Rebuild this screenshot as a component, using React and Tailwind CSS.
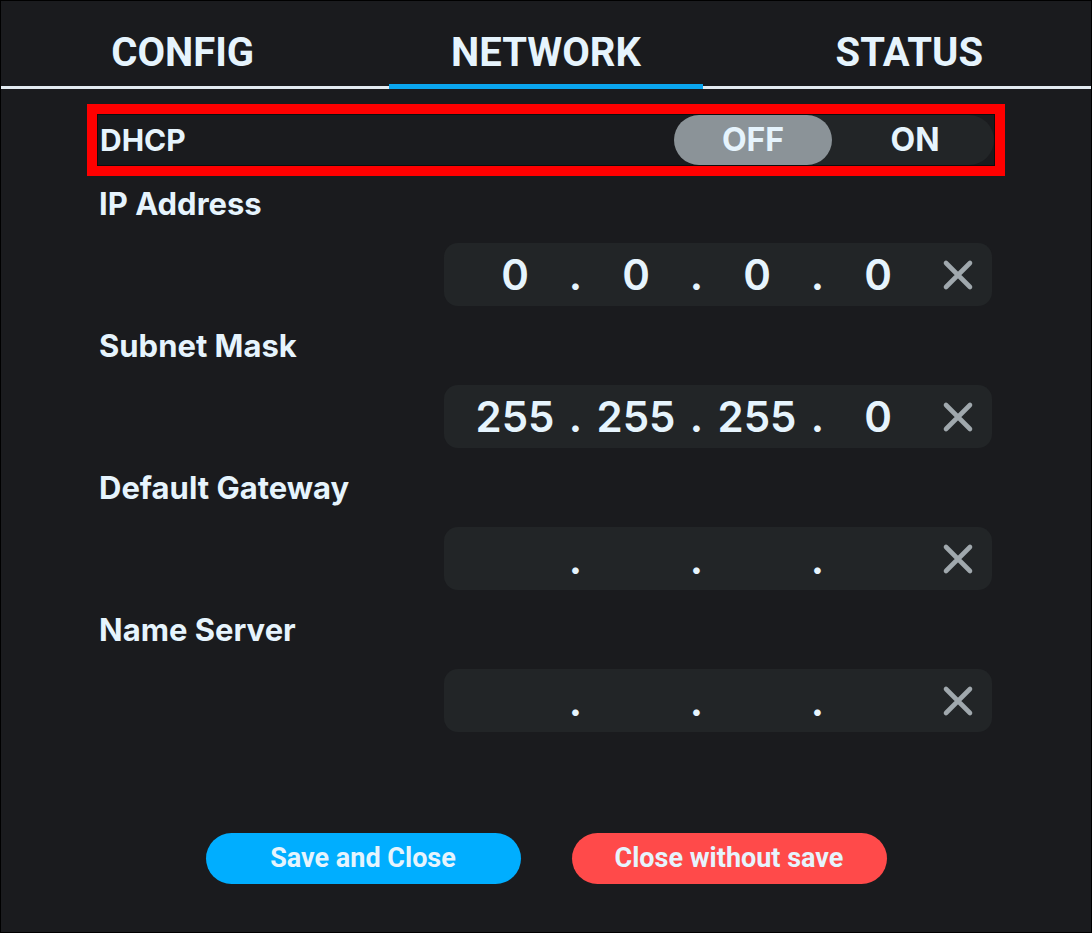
import React from 'react';

const tabs = ['CONFIG', 'NETWORK', 'STATUS'];

const fields = [
  { label: 'IP Address', parts: ['0', '0', '0', '0'] },
  { label: 'Subnet Mask', parts: ['255', '255', '255', '0'] },
  { label: 'Default Gateway', parts: ['', '', '', ''] },
  { label: 'Name Server', parts: ['', '', '', ''] },
];

function ClearIcon() {
  return (
    <svg width="32" height="32" viewBox="0 0 32 32" fill="none">
      <path d="M4 4 L28 28 M28 4 L4 28" stroke="#a0a8ad" strokeWidth="4.6" strokeLinecap="round" />
    </svg>
  );
}

function IpInput({ parts }) {
  return (
    <div className="flex items-center h-[63px] ml-[345px] rounded-[14px] bg-[#222527] pl-[21px]">
      {parts.map((p, i) => (
        <React.Fragment key={i}>
          <span className="w-[100px] text-center text-[42px] font-semibold leading-none">{p}</span>
          {i < 3 && <span className="w-[21px] text-center text-[42px] font-semibold leading-none">.</span>}
        </React.Fragment>
      ))}
      <span className="w-[60px] flex justify-center">
        <ClearIcon />
      </span>
    </div>
  );
}

export default function App() {
  return (
    <div
      className="w-[1092px] h-[933px] bg-[#1a1b1e] border border-black text-[#e6f4fd] overflow-hidden"
      style={{ fontFamily: 'Inter, "Noto Sans", sans-serif' }}
    >
      {/* Tabs */}
      <div className="flex h-[88px] border-b-[3px] border-[#e3ebf1]">
        {tabs.map((t) => (
          <div key={t} className="relative flex-1 flex items-center justify-center pt-[18px]">
            <span className="text-[40px] font-bold" style={{ fontFamily: 'Roboto, sans-serif' }}>{t}</span>
            {t === 'NETWORK' && (
              <div className="absolute left-[25px] right-[25px] bottom-[-3px] h-[5px] bg-[#0aa6ef]" />
            )}
          </div>
        ))}
      </div>

      <div className="px-[86px] pt-[15px]">
        {/* DHCP row */}
        <div className="h-[72px] border-[10px] border-[#ff0000]">
          <div className="flex items-center justify-between h-full border border-[#0d0d0e] pl-[2px]">
            <span className="text-[30px] font-bold">DHCP</span>
            <div className="flex h-[50px] w-[320px] rounded-full bg-[#222527] text-[32px] font-bold">
              <div className="flex-1 flex items-center justify-center rounded-full bg-[#8b9398]">OFF</div>
              <div className="flex-1 flex items-center justify-center pl-[4px]">ON</div>
            </div>
          </div>
        </div>

        {/* Fields */}
        <div className="px-[12px] pt-[8px]">
          {fields.map((f, i) => (
            <div key={f.label} className={i > 0 ? 'mt-[20px]' : ''}>
              <div className="h-[40px] flex items-center text-[31px] font-bold">{f.label}</div>
              <div className="mt-[19px] pr-[1px]">
                <IpInput parts={f.parts} />
              </div>
            </div>
          ))}
        </div>

        {/* Buttons */}
        <div className="flex justify-center gap-[51px] mt-[101px]" style={{ fontFamily: 'Roboto, sans-serif' }}>
          <button className="w-[315px] h-[51px] rounded-full bg-[#00aeff] text-[27px] font-bold text-[#e6f4fd]">
            Save and Close
          </button>
          <button className="w-[315px] h-[51px] rounded-full bg-[#ff4a4a] text-[27px] font-bold text-[#e6f4fd]">
            Close without save
          </button>
        </div>
      </div>
    </div>
  );
}
